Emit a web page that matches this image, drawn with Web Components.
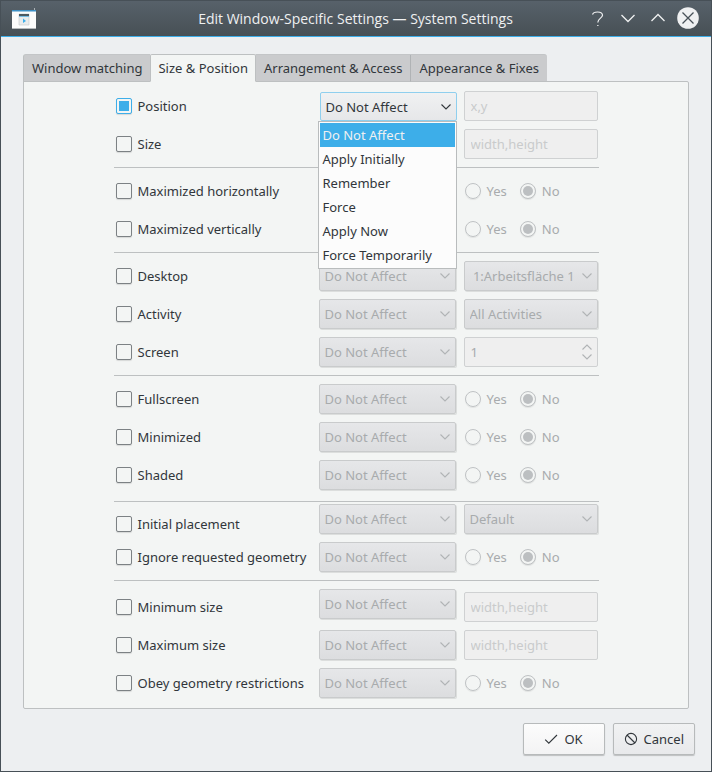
<!DOCTYPE html>
<html lang="en">
<head>
<meta charset="utf-8">
<meta name="viewport" content="width=device-width, initial-scale=1">
<title>Edit Window-Specific Settings — System Settings</title>
<style>
    :root {
        --text: #31363b;
        --text-disabled: #a8abad;
        --placeholder: #c9cbcc;
        --highlight: #3daee9;
        --line: #bdc0c1;
        --view: #f3f5f4;
        --frame: #475057;
    }

    body {
        margin: 0;
        color: var(--text);
        font: 13px/18px "Noto Sans", sans-serif;
    }
</style>
</head>
<body>
<app-window heading="Edit Window-Specific Settings — System Settings">
    <tab-panel tabs="Window matching|Size &amp; Position|Arrangement &amp; Access|Appearance &amp; Fixes" active="1">
        <rule-group>
            <rule-row label="Position" checked>
                <combo-box slot="policy" label="Position policy" open
                    options="Do Not Affect|Apply Initially|Remember|Force|Apply Now|Force Temporarily"></combo-box>
                <text-field label="Position value" hint="x,y"></text-field>
            </rule-row>
            <rule-row label="Size"><text-field label="Size value" hint="width,height"></text-field></rule-row>
        </rule-group>
        <rule-group>
            <rule-row label="Maximized horizontally"><yes-no></yes-no></rule-row>
            <rule-row label="Maximized vertically"><yes-no></yes-no></rule-row>
        </rule-group>
        <rule-group>
            <rule-row label="Desktop"><combo-box label="Desktop value" options="&nbsp;1:Arbeitsfläche 1" disabled></combo-box></rule-row>
            <rule-row label="Activity"><combo-box label="Activity value" options="All Activities" disabled></combo-box></rule-row>
            <rule-row label="Screen"><spin-box label="Screen value" value="1"></spin-box></rule-row>
        </rule-group>
        <rule-group>
            <rule-row label="Fullscreen"><yes-no></yes-no></rule-row>
            <rule-row label="Minimized"><yes-no></yes-no></rule-row>
            <rule-row label="Shaded"><yes-no></yes-no></rule-row>
        </rule-group>
        <rule-group tight>
            <rule-row label="Initial placement" sink="label"><combo-box label="Placement value" options="Default" disabled></combo-box></rule-row>
            <rule-row label="Ignore requested geometry"><yes-no></yes-no></rule-row>
        </rule-group>
        <rule-group>
            <rule-row label="Minimum size" sink="row"><text-field label="Minimum size value" hint="width,height"></text-field></rule-row>
            <rule-row label="Maximum size"><text-field label="Maximum size value" hint="width,height"></text-field></rule-row>
            <rule-row label="Obey geometry restrictions"><yes-no></yes-no></rule-row>
        </rule-group>
    </tab-panel>
    <push-button slot="actions" bright>
        <svg slot="icon" width="14" height="14" viewBox="0 0 14 14" fill="none" stroke="currentColor" stroke-width="1.1"><path d="M1.2 7.6 4.8 11.2 13 3"/></svg>
        OK
    </push-button>
    <push-button slot="actions">
        <svg slot="icon" width="14" height="14" viewBox="0 0 14 14" fill="none" stroke="currentColor" stroke-width="1.1"><circle cx="7" cy="7" r="5.6"/><path d="M3 3 11 11"/></svg>
        Cancel
    </push-button>
</app-window>

<script>
class AppWindow extends HTMLElement {
    constructor() {
        super();
        this.attachShadow({ mode: 'open' });
    }

    connectedCallback() {
        this.shadowRoot.innerHTML = `
            <style>
                :host {
                    display: flex;
                    flex-direction: column;
                    box-sizing: border-box;
                    min-height: 100vh;
                    border: 1px solid var(--frame);
                    background: #edeff1;
                }

                header {
                    display: grid;
                    grid-template-columns: 1fr auto 1fr;
                    align-items: center;
                    height: 35px;
                    padding: 0 11px 0 10px;
                    border-bottom: 1px solid var(--highlight);
                    background: linear-gradient(#57616a, #475055);
                    color: #eff0f1;
                }

                h1 {
                    margin: 0;
                    font-family: "Open Sans", "Noto Sans", sans-serif;
                    font-size: 14px;
                    font-weight: 400;
                }

                nav {
                    display: flex;
                    justify-content: flex-end;
                    gap: 6px;
                }

                nav button {
                    display: flex;
                    width: 24px;
                    height: 24px;
                    padding: 0;
                    border: 0;
                    background: none;
                    color: inherit;
                }

                svg {
                    display: block;
                }

                main {
                    flex: 1;
                    padding: 17px 22px 0;
                }

                footer {
                    display: flex;
                    justify-content: flex-end;
                    gap: 8px;
                    padding: 14px 16px 16px;
                }
            </style>
            <header>
                <svg width="26" height="22" viewBox="0 0 26 22">
                    <path d="M1 2h24v19H1z" fill="#fcfcfc"/>
                    <path d="M1 2h24v1.5H1z" fill="#3d8fc4"/>
                    <path d="M1 20h24v1H1z" fill="#b5b9bb"/>
                    <path d="M23 0h1v2h-1z" fill="#aab0b4"/>
                    <path d="M8 6h10v11H8z" fill="#e9ebec" stroke="#c3c7c9" stroke-width=".6"/>
                    <path d="M8 6h10v2H8z" fill="#4d5960"/>
                    <path d="M8 8h10v1H8z" fill="#79bde5"/>
                    <path d="M12 10.5 15 13 12 15z" fill="#3daee9"/>
                </svg>
                <h1></h1>
                <nav>
                    <button aria-label="Help"><svg width="24" height="24" viewBox="0 0 24 24" fill="none" stroke="currentColor" stroke-width="1.2"><path d="M6.5 7.5C7 5.800 9 5 11.500 5 14.500 5 16.500 6.200 16.500 8.300 16.500 11 11.800 11.500 11.800 15.500"/><path d="M11.200 18.500h1.300"/></svg></button>
                    <button aria-label="Minimize"><svg width="24" height="24" viewBox="0 0 24 24" fill="none" stroke="currentColor" stroke-width="1.3"><path d="M5.500 8 12 14.500 18.500 8"/></svg></button>
                    <button aria-label="Maximize"><svg width="24" height="24" viewBox="0 0 24 24" fill="none" stroke="currentColor" stroke-width="1.3"><path d="M5.500 14 12 7.500 18.500 14"/></svg></button>
                    <button aria-label="Close"><svg width="24" height="24" viewBox="0 0 24 24" fill="none" stroke="#475057" stroke-width="1.3"><circle cx="12" cy="11" r="10.800" fill="#eff0f1" stroke="none"/><path d="M6.500 5.500 17.500 16.500M17.500 5.500 6.500 16.500"/></svg></button>
                </nav>
            </header>
            <main><slot></slot></main>
            <footer><slot name="actions"></slot></footer>
        `;
        this.shadowRoot.querySelector('h1').textContent = this.getAttribute('heading');
    }
}

class TabPanel extends HTMLElement {
    constructor() {
        super();
        this.attachShadow({ mode: 'open' });
    }

    connectedCallback() {
        const active = Number(this.getAttribute('active'));
        this.shadowRoot.innerHTML = `
            <style>
                :host {
                    display: block;
                }

                .tabs {
                    display: flex;
                    margin-bottom: -1px;
                }

                .tabs button {
                    box-sizing: border-box;
                    height: 28px;
                    padding: 0 8px;
                    border: solid var(--line);
                    border-width: 1px 0;
                    border-top-color: #c3c5c7;
                    background: #cacbcd;
                    color: inherit;
                    font: inherit;
                    white-space: nowrap;
                }

                .tabs button:first-child {
                    border-left: 1px solid var(--line);
                    border-top-left-radius: 3px;
                }

                .tabs button:last-child {
                    border-left: 1px solid #b0b3b5;
                    border-top-right-radius: 3px;
                }

                .tabs button[aria-selected=true] {
                    position: relative;
                    border: 1px solid var(--line);
                    border-bottom-color: var(--view);
                    border-radius: 2px 2px 0 0;
                    padding: 0 7px;
                    background: var(--view);
                }

                .panel {
                    display: flex;
                    flex-direction: column;
                    align-items: center;
                    padding: 9px 0 10px;
                    border: 1px solid var(--line);
                    border-radius: 0 2px 2px 2px;
                    background: var(--view);
                }

                .rules {
                    width: 485px;
                    max-width: 100%;
                }
            </style>
            <div class="tabs" role="tablist">
                ${this.getAttribute('tabs').split('|').map((tab, i) => `
                    <button role="tab" aria-selected="${i === active}">${tab.replace('&', '&amp;')}</button>
                `).join('')}
            </div>
            <div class="panel" role="tabpanel"><div class="rules"><slot></slot></div></div>
        `;
    }
}

class RuleGroup extends HTMLElement {
    constructor() {
        super();
        this.attachShadow({ mode: 'open' });
        this.shadowRoot.innerHTML = `
            <style>
                :host {
                    display: flex;
                    flex-direction: column;
                    gap: 8px;
                }

                :host(:not(:first-child)) {
                    margin-top: 8px;
                    padding-top: 8px;
                    border-top: 1px solid var(--line);
                }

                :host([tight]) {
                    margin-top: 11px;
                    padding-top: 2px;
                }
            </style>
            <slot></slot>
        `;
    }
}

class RuleRow extends HTMLElement {
    constructor() {
        super();
        this.attachShadow({ mode: 'open' });
    }

    connectedCallback() {
        const label = this.getAttribute('label');
        this.shadowRoot.innerHTML = `
            <style>
                :host {
                    display: grid;
                    grid-template-columns: 1fr 137px 134px;
                    column-gap: 8px;
                    align-items: start;
                    padding: 0 1px 0 2px;
                }

                /* the value sits on the bottom edge of a slightly taller row */
                :host([sink=row]) {
                    min-height: 33px;
                }

                :host([sink=row]) label,
                :host([sink=row]) .value,
                :host([sink=label]) label {
                    align-self: end;
                }

                label {
                    display: flex;
                    align-items: center;
                    gap: 6px;
                    height: 30px;
                    white-space: nowrap;
                }

                :host([sink=label]) label {
                    height: 20px;
                }

                input {
                    appearance: none;
                    box-sizing: border-box;
                    width: 16px;
                    height: 16px;
                    margin: 0;
                    border: 1px solid #7c8184;
                    border-radius: 2px;
                    background: var(--view);
                    box-shadow: 0 1px 1px rgba(0, 0, 0, 0.12);
                }

                input:checked {
                    padding: 2px;
                    border-color: var(--highlight);
                    background-color: var(--highlight);
                    background-clip: content-box;
                }
            </style>
            <label><input type="checkbox" ${this.hasAttribute('checked') ? 'checked' : ''}>${label}</label>
            <slot name="policy"><combo-box label="${label} policy" options="Do Not Affect" disabled></combo-box></slot>
            <div class="value"><slot></slot></div>
        `;
    }
}

class ComboBox extends HTMLElement {
    constructor() {
        super();
        this.attachShadow({ mode: 'open' });
    }

    connectedCallback() {
        const options = this.getAttribute('options').split('|');
        const open = this.hasAttribute('open');
        this.shadowRoot.innerHTML = `
            <style>
                :host {
                    display: grid;
                    position: relative;
                }

                select,
                svg {
                    grid-area: 1 / 1;
                }

                select {
                    appearance: none;
                    box-sizing: border-box;
                    width: 100%;
                    height: 30px;
                    margin: 0;
                    padding: 0 16px 0 5px;
                    border: 1px solid #c9cbcc;
                    border-radius: 2px;
                    background: linear-gradient(#e6e7e9, #dcdddf);
                    box-shadow: 1px 1px 0 #dcdedd;
                    color: var(--text-disabled);
                    font: inherit;
                    opacity: 1;
                }

                svg {
                    place-self: center end;
                    margin-right: 5px;
                    color: #b0b3b5;
                    pointer-events: none;
                }

                /* pressed in by a pixel while its list is shown */
                :host([open]) {
                    margin-right: -1px;
                    padding: 1px 0 0 1px;
                }

                :host([open]) select {
                    height: 29px;
                    border-color: #8fcfee;
                    background: linear-gradient(#f0f1f2, #e6e7e9);
                    box-shadow: none;
                    color: var(--text);
                }

                :host([open]) svg {
                    color: var(--text);
                }

                ul {
                    position: absolute;
                    z-index: 1;
                    top: 30px;
                    left: -1px;
                    right: 0;
                    margin: 0;
                    padding: 1px;
                    border: 1px solid #b9bcbd;
                    background: #fcfcfc;
                    list-style: none;
                }

                li {
                    padding: 3px;
                }

                li[aria-selected=true] {
                    background: var(--highlight);
                    color: #eff0f1;
                }
            </style>
            <select aria-label="${this.getAttribute('label')}" ${this.hasAttribute('disabled') ? 'disabled' : ''}>
                ${options.map(option => `<option>${option}</option>`).join('')}
            </select>
            <svg width="12" height="8" viewBox="0 0 12 8" fill="none" stroke="currentColor" stroke-width="1.1"><path d="M1.500 1.500 6 6 10.500 1.500"/></svg>
            ${open ? `
                <ul role="listbox">
                    ${options.map((option, i) => `<li role="option" aria-selected="${i === 0}">${option}</li>`).join('')}
                </ul>
            ` : ''}
        `;
    }
}

const fieldStyle = `
    :host {
        display: grid;
    }

    input {
        appearance: none;
        box-sizing: border-box;
        width: 100%;
        height: 30px;
        margin: 0;
        padding: 0 6px;
        border: 1px solid #cfd1d2;
        border-radius: 2px;
        background: #efefef;
        color: var(--text-disabled);
        font: inherit;
    }

    input::placeholder {
        color: var(--placeholder);
        opacity: 1;
    }
`;

class TextField extends HTMLElement {
    constructor() {
        super();
        this.attachShadow({ mode: 'open' });
    }

    connectedCallback() {
        this.shadowRoot.innerHTML = `
            <style>${fieldStyle}</style>
            <input type="text" aria-label="${this.getAttribute('label')}" placeholder="${this.getAttribute('hint')}" disabled>
        `;
    }
}

class SpinBox extends HTMLElement {
    constructor() {
        super();
        this.attachShadow({ mode: 'open' });
    }

    connectedCallback() {
        this.shadowRoot.innerHTML = `
            <style>
                ${fieldStyle}

                input,
                .steps {
                    grid-area: 1 / 1;
                }

                input {
                    appearance: textfield;
                }

                .steps {
                    display: flex;
                    flex-direction: column;
                    place-self: center end;
                    gap: 2px;
                    margin-right: 5px;
                }

                button {
                    display: flex;
                    padding: 0;
                    border: 0;
                    background: none;
                    color: #b0b3b5;
                }
            </style>
            <input type="number" aria-label="${this.getAttribute('label')}" value="${this.getAttribute('value')}" disabled>
            <div class="steps">
                <button aria-label="Increase" disabled><svg width="12" height="8" viewBox="0 0 12 8" fill="none" stroke="currentColor" stroke-width="1.1"><path d="M1.500 6.500 6 2 10.500 6.500"/></svg></button>
                <button aria-label="Decrease" disabled><svg width="12" height="8" viewBox="0 0 12 8" fill="none" stroke="currentColor" stroke-width="1.1"><path d="M1.500 1.500 6 6 10.500 1.500"/></svg></button>
            </div>
        `;
    }
}

class YesNo extends HTMLElement {
    constructor() {
        super();
        this.attachShadow({ mode: 'open' });
        this.shadowRoot.innerHTML = `
            <style>
                :host {
                    display: flex;
                    align-items: center;
                    gap: 13px;
                    height: 30px;
                    padding-left: 1px;
                    color: var(--text-disabled);
                }

                label {
                    display: flex;
                    align-items: center;
                    gap: 6px;
                }

                input {
                    appearance: none;
                    box-sizing: border-box;
                    width: 16px;
                    height: 16px;
                    margin: 0;
                    padding: 2px;
                    border: 1px solid #bfc2c4;
                    border-radius: 50%;
                    box-shadow: 0 1px 1px rgba(0, 0, 0, 0.08);
                }

                input:checked {
                    background: #bcbfc1;
                    background-clip: content-box;
                }
            </style>
            <label><input type="radio" name="answer" disabled>Yes</label>
            <label><input type="radio" name="answer" checked disabled>No</label>
        `;
    }
}

class PushButton extends HTMLElement {
    constructor() {
        super();
        this.attachShadow({ mode: 'open' });
        this.shadowRoot.innerHTML = `
            <style>
                :host {
                    display: block;
                }

                button {
                    display: flex;
                    align-items: center;
                    justify-content: center;
                    gap: 6px;
                    box-sizing: border-box;
                    min-width: 82px;
                    height: 32px;
                    padding: 0 10px;
                    border: 1px solid #b7babb;
                    border-radius: 2px;
                    background: linear-gradient(#f1f2f3, #e8e9eb);
                    box-shadow: 0 1px 1px rgba(0, 0, 0, 0.2);
                    color: inherit;
                    font: inherit;
                }

                :host([bright]) button {
                    background: linear-gradient(#fcfcfc, #f3f3f4);
                }
            </style>
            <button><slot name="icon"></slot><span><slot></slot></span></button>
        `;
    }
}

customElements.define('app-window', AppWindow);
customElements.define('tab-panel', TabPanel);
customElements.define('rule-group', RuleGroup);
customElements.define('rule-row', RuleRow);
customElements.define('combo-box', ComboBox);
customElements.define('text-field', TextField);
customElements.define('spin-box', SpinBox);
customElements.define('yes-no', YesNo);
customElements.define('push-button', PushButton);
</script>
</body>
</html>
